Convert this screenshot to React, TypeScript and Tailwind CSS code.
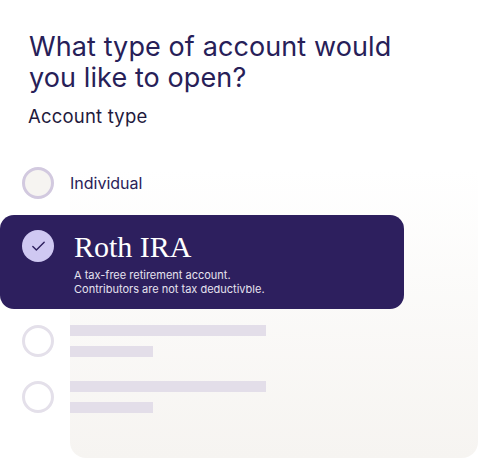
import { Check } from "lucide-react";

const sans = "font-['Inter','Noto_Sans',sans-serif]";

function SkeletonRow(): JSX.Element {
  return (
    <div className="flex items-center gap-[16px] pl-[22px]">
      <div className="size-[32px] shrink-0 rounded-full border-[3px] border-[#e4e0ea]" />
      <div className="flex flex-col gap-[10px]">
        <div className="h-[11px] w-[196px] bg-[#e3dee9]" />
        <div className="h-[11px] w-[83px] bg-[#e3dee9]" />
      </div>
    </div>
  );
}

export default function App(): JSX.Element {
  return (
    <div className={`relative h-[459px] w-[479px] overflow-hidden bg-white ${sans}`}>
      <div className="absolute bottom-[1px] left-[70px] right-[1px] top-[170px] rounded-b-[16px] bg-gradient-to-b from-white to-[#f6f4f1]" />
      <div className="relative flex flex-col">
        <h1 className="ml-[29px] mt-[31px] text-[27px] font-normal leading-[31px] tracking-[0.1px] text-[#272058]">
          What type of account would
          <br />
          you like to open?
        </h1>
        <p className="ml-[28px] mt-[11px] text-[18.5px] leading-[24px] tracking-[0.2px] text-[#1f1a3d]">Account type</p>

        <div className="mt-[39px] flex items-center gap-[16px] pl-[22px]">
          <div className="size-[32px] rounded-full border-[3px] border-[#d2c9df] bg-[#f6f4f1]" />
          <span className="text-[16px] text-[#2a2158]">Individual</span>
        </div>

        <div className="mt-[16px] flex w-[404px] items-start gap-[20px] rounded-[14px] bg-[#2d1f5e] pb-[13px] pl-[22px] pt-[15px]">
          <div className="flex size-[32px] shrink-0 items-center justify-center rounded-full bg-[#cfc8f2]">
            <Check className="size-[17px] text-[#2d1f5e]" strokeWidth={2} />
          </div>
          <div className="flex flex-col">
            <span className="font-['Liberation_Serif',serif] text-[30px] leading-[34px] text-white">Roth IRA</span>
            <span className="mt-[4px] text-[11px] leading-[14px] text-[#e6e2ef]">
              A tax-free retirement account.
              <br />
              Contributors are not tax deductivble.
            </span>
          </div>
        </div>

        <div className="mt-[16px] flex flex-col gap-[24px]">
          <SkeletonRow />
          <SkeletonRow />
        </div>
      </div>
    </div>
  );
}
